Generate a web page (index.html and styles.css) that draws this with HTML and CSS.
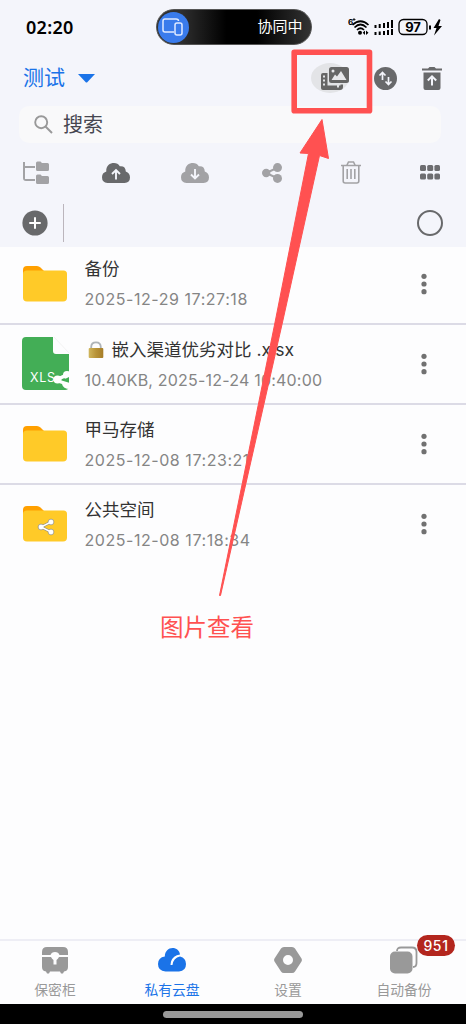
FILE: index.html
```html
<!DOCTYPE html>
<html lang="zh-CN">
<head>
<meta charset="utf-8">
<title>私有云盘</title>
<link rel="stylesheet" href="styles.css">
</head>
<body>
<svg class="defs" width="0" height="0">
  <symbol id="folder" viewBox="0 0 44 36"><path fill="#ffa000" d="M0 4Q0 0 4 0H14Q16 0 17.500 1.500L22 6V12H0Z"/><path fill="#ffca28" d="M0 8Q0 4.500 4 4.500H40.500Q44 4.500 44 8V31.500Q44 35.500 40 35.500H4Q0 35.500 0 31.500Z"/></symbol>
  <symbol id="dots" viewBox="0 0 6 22"><g fill="#717171"><circle cx="3" cy="3.300" r="2.600"/><circle cx="3" cy="11" r="2.600"/><circle cx="3" cy="18.700" r="2.600"/></g></symbol>
  <symbol id="cloud" viewBox="0 0 28 20"><path d="M5.500 20Q0 19.500 0 14.200Q0 10 4.300 8.600C3.800 2.500 8 0 12 0Q15.800 0 17.800 3.200Q23.500 2.500 23.800 8.500Q28 10 28 14.500Q28 19.500 22.500 20Z"/></symbol>
</svg>
<div class="screen">
  <header class="top">
    <div class="status">
      <span class="time">02:20</span>
      <div class="island">
        <span class="cast"><svg width="22" height="18" viewBox="0 0 22 18" fill="none" stroke="#dfeaff" stroke-width="1.500"><path d="M12 14H3Q1 14 1 12V3Q1 1 3 1H14Q16.500 1 16.500 3"/><rect x="13" y="5" width="7" height="12" rx="2"/></svg></span>
        <span>协同中</span>
      </div>
      <div class="signals">
        <svg width="94" height="18" viewBox="0 0 94 18">
          <text x="0" y="7" font-size="8" font-weight="700">6</text><path d="M6 0v3M4.500 1.500h3" stroke="#000" stroke-width=".8"/>
          <g fill="none" stroke="#000" stroke-width="1.700"><path d="M4.500 7Q12.500 -.5 20.500 7M6.500 9.500Q12.500 3.500 18.500 9.500M9 12Q12.500 8.500 16 12"/></g>
          <circle cx="12" cy="14.800" r="2"/><path d="M17 12.500v4.600L14.700 14.800ZM18 12.500v4.600L20.500 14.800Z"/>
          <path d="M26.500 7h2v3h-2zM30.700 6h2v4h-2zM35 5h2v5h-2zM39 4h2v6h-2zM43 2h2v8h-2zM26.500 14h2v3h-2zM30.700 13.500h2v3.500h-2zM35 13h2v4h-2zM39 12h2v5h-2zM43 11h2v6h-2z"/>
          <rect x="51" y="1.500" width="28" height="15" rx="4.500" fill="none" stroke="#000" stroke-width="1.300"/>
          <text x="65" y="13.800" font-size="13" font-weight="700" text-anchor="middle">97</text>
          <path d="M81 7.500h2v4h-2zM91 1l-5.500 9h3L86 17.500 94 8h-3.500L92.500 2z"/>
        </svg>
      </div>
    </div>
    <div class="title">
      <div class="drive">测试<svg width="17" height="9" viewBox="0 0 17 9"><path fill="#1a73e8" d="M0 0H17L9.500 8Q8.500 9 7.500 8Z"/></svg></div>
      <div class="title-actions">
        <span class="gallery"><svg width="30" height="24" viewBox="0 0 30 24" fill="#666"><path fill-rule="evenodd" d="M3 6H7.500V18.500H20.500V17.500H23V20Q23 23 20 23H3Q1 23 1 21V8Q1 6 3 6ZM3 8.500h2v2H3zM3 12.500h2v2H3zM3 16.500h2v2H3zM17 18.500h2v2h-2z"/><rect x="9" y="0" width="20" height="16" rx="2.500"/><g fill="#e8e8eb"><path d="M11.500 13 15 7.500 17 9.500 21 4 26.500 13Z"/><circle cx="13" cy="4" r="1.500"/></g></svg></span>
        <svg width="23" height="23" viewBox="0 0 23 23"><circle cx="11.500" cy="11.500" r="11.500" fill="#68696b"/><path d="M8.500 13V6M5.500 8.500l3-3 3 3M14.500 10v7M11.500 14.500l3 3 3-3" fill="none" stroke="#f4f5fb" stroke-width="1.700"/></svg>
        <svg width="20" height="23" viewBox="0 0 20 23"><path fill="#68696b" d="M0 1.500H6L7.500 0H12.500L14 1.500H20V3.500H0ZM1.500 5.500H18.500V21Q18.500 23 16.500 23H3.500Q1.500 23 1.500 21Z"/><path d="M10 18.500V11M5.800 13.500 10 9.300l4.200 4.200" fill="none" stroke="#f4f5fb" stroke-width="2"/></svg>
      </div>
    </div>
    <div class="search"><svg width="19" height="19" viewBox="0 0 19 19" fill="none" stroke="#999" stroke-width="1.900"><circle cx="7.200" cy="7.200" r="6"/><path d="M11.500 11.500 18 18"/></svg><span>搜索</span></div>
    <div class="tools">
      <svg width="26" height="24" viewBox="0 0 26 24" fill="#a2a2a5"><path d="M0 1H2V5H12V7H2V18H12V20H3Q0 20 0 17ZM13 2Q13 .5 14.500.5H17.500L19 2H24.500Q26 2 26 3.500V8.500Q26 10 24.500 10H14.500Q13 10 13 8.500ZM13 15Q13 13.500 14.500 13.500H17.500L19 15H24.500Q26 15 26 16.500V21.500Q26 23 24.500 23H14.500Q13 23 13 21.500Z"/></svg>
      <svg width="28" height="20" viewBox="0 0 28 20" fill="#68696b"><use href="#cloud"/><path d="M14 16.500V8M10 11 14 7l4 4" fill="none" stroke="#f4f5fb" stroke-width="1.900"/></svg>
      <svg width="28" height="20" viewBox="0 0 28 20" fill="#a2a2a5"><use href="#cloud"/><path d="M14 6V15M10 11.500l4 4 4-4" fill="none" stroke="#f4f5fb" stroke-width="1.900"/></svg>
      <svg width="20" height="20" viewBox="0 0 20 20" fill="#a2a2a5"><path d="M16 4.500 4 10l12 5.500" fill="none" stroke="#a2a2a5" stroke-width="2"/><circle cx="4.200" cy="10" r="4.200"/><circle cx="15.500" cy="4.600" r="4.500"/><circle cx="15.500" cy="15.400" r="4.500"/></svg>
      <svg width="20" height="23" viewBox="0 0 20 23" fill="none" stroke="#a2a2a5" stroke-width="1.600"><path d="M0 4.500H20M6 4 7.500 1H12.500L14 4M2.200 5V20Q2.200 22 4.200 22H15.800Q17.800 22 17.800 20V5M6.200 8V18M10 8V18M13.800 8V18"/></svg>
      <svg width="20" height="15" viewBox="0 0 20 15" fill="#6d6d70"><rect width="6" height="6" rx="1.500"/><rect x="7.200" width="6" height="6" rx="1.500"/><rect x="14.400" width="5.600" height="6" rx="1.500"/><rect y="8.600" width="6" height="6" rx="1.500"/><rect x="7.200" y="8.600" width="6" height="6" rx="1.500"/><rect x="14.400" y="8.600" width="5.600" height="6" rx="1.500"/></svg>
    </div>
    <div class="path">
      <svg width="26" height="26" viewBox="0 0 26 26"><circle cx="13" cy="13" r="12.600" fill="#68696b"/><path d="M8 13h10M13 8v10" stroke="#fff" stroke-width="2" stroke-linecap="round"/></svg>
      <i class="divider"></i>
      <i class="ring"></i>
    </div>
  </header>
  <main class="files">
    <div class="row">
      <div class="thumb"><svg width="44" height="36"><use href="#folder"/></svg></div>
      <div class="info"><div class="name">备份</div><div class="meta">2025-12-29 17:27:18</div></div>
      <svg class="more" width="6" height="22"><use href="#dots"/></svg>
    </div>
    <div class="row">
      <div class="thumb"><svg width="48" height="54" viewBox="0 0 48 54"><path fill="#43ae56" d="M4 0H31V14Q31 17 34 17H47V49Q47 53 43 53H4Q0 53 0 49V4Q0 0 4 0Z"/><path d="M32 0 47 16" stroke="#eee" stroke-width=".7"/><text x="8" y="44.500" fill="#fff" font-size="12.500" textLength="25">XLS</text><g fill="#fff"><circle cx="35.500" cy="42.500" r="4"/><circle cx="45" cy="38" r="4"/><path d="M34 41 47 35V39L38 43 48 46V52Q41 52 40 47L34 45Z"/></g><path fill="#43ae56" d="M42 42.500 47 40V44.500Z"/></svg></div>
      <div class="info"><div class="name"><svg class="lock" width="16" height="18" viewBox="0 0 16 18"><defs><linearGradient id="brass"><stop stop-color="#d0b65d"/><stop offset=".5" stop-color="#b89338"/><stop offset="1" stop-color="#a67d28"/></linearGradient></defs><path d="M3.200 9V6Q3.200 1.300 8 1.300T12.800 6V9" fill="none" stroke="#aeb4b8" stroke-width="1.800"/><rect x=".7" y="7" width="14.600" height="10" rx="1" fill="url(#brass)"/></svg>嵌入渠道优劣对比 .xlsx</div><div class="meta long">10.40KB, 2025-12-24 10:40:00</div></div>
      <svg class="more" width="6" height="22"><use href="#dots"/></svg>
    </div>
    <div class="row">
      <div class="thumb"><svg width="44" height="36"><use href="#folder"/></svg></div>
      <div class="info"><div class="name">甲马存储</div><div class="meta">2025-12-08 17:23:21</div></div>
      <svg class="more" width="6" height="22"><use href="#dots"/></svg>
    </div>
    <div class="row">
      <div class="thumb"><svg width="44" height="36" viewBox="0 0 44 36"><use href="#folder"/><path d="M28 16 18 21l10 5" fill="none" stroke="#8d8b80" stroke-width="2.600"/><g fill="#fff" stroke="#8d8b80" stroke-width=".7"><circle cx="18" cy="21" r="2.900"/><circle cx="28" cy="16" r="2.900"/><circle cx="28" cy="26" r="2.900"/></g><path d="M28 16 18 21l10 5" fill="none" stroke="#fff" stroke-width="1.400"/></svg></div>
      <div class="info"><div class="name">公共空间</div><div class="meta">2025-12-08 17:18:34</div></div>
      <svg class="more" width="6" height="22"><use href="#dots"/></svg>
    </div>
  </main>
  <nav class="tabs">
    <div class="tab"><svg width="28" height="28" viewBox="0 0 28 28" fill="#999"><path d="M1 9V6Q1 1 6 1H22Q27 1 27 6V9H18.500Q17.500 6 14 6T9.500 9ZM1 11H10Q11 13 12.500 14V18.500H15.500V14Q17 13 18 11H27V21Q27 25 23 25.500L22 27.500H20L19 25.500H9L8 27.500H6L5 25.500Q1 25 1 21Z"/></svg><span>保密柜</span></div>
    <div class="tab active"><svg width="28" height="28" viewBox="0 0 28 28"><path fill="#1a73e8" d="M7.500 25.500Q0 25 0 18Q0 11.500 6.800 10.500C7 5 10.500 2 14.500 2C18.500 2 21.500 4.500 22 8.500Q15 9.500 13 15.500L12.500 19H14.500Q15.500 11.500 22 10.500Q28 12 28 18Q28 25 21 25.500Z"/></svg><span>私有云盘</span></div>
    <div class="tab"><svg width="28" height="28" viewBox="0 0 28 28" fill="#999"><path fill-rule="evenodd" d="M7 2.500Q8 1 10 1H18Q20 1 21 2.500L27.500 12.500Q28.300 14 27.500 15.500L21 25.500Q20 27 18 27H10Q8 27 7 25.500L.5 15.500Q-.3 14 .5 12.500ZM14 9A5 5 0 1 0 14 19 5 5 0 1 0 14 9Z"/></svg><span>设置</span></div>
    <div class="tab"><svg width="28" height="28" viewBox="0 0 28 28"><path d="M7 5Q7 1.500 11 1.500H22Q26.500 1.500 26.500 6V17Q26.500 21 23 21" fill="none" stroke="#999" stroke-width="1.800"/><rect x="0" y="5.500" width="22.500" height="22" rx="5" fill="#999"/></svg><span>自动备份</span><b class="badge">951</b></div>
  </nav>
  <div class="gesture"><i></i></div>
  <svg class="callout" width="466" height="1024" viewBox="0 0 466 1024"><rect x="294.200" y="52.300" width="75.300" height="58.500" fill="none" stroke="#ff5151" stroke-width="5.600" stroke-linejoin="round"/><path fill="#ff5151" stroke="#ff5151" stroke-linejoin="round" d="M322 119.500 328.500 158.500 319.500 155.500 283 320 220.500 595.500H219.500L275.500 320 308.500 153.500 300 153Z"/></svg>
  <div class="caption">图片查看</div>
</div>
</body>
</html>
```
FILE: styles.css
```css
* { box-sizing: border-box; }
body { margin: 0; background: #fdfdfe; font-family: Inter, "Noto Sans CJK SC", sans-serif; color: #333; }
svg { display: block; flex: none; }
.defs { position: absolute; }
.screen { position: relative; width: 466px; height: 1024px; display: flex; flex-direction: column; overflow: hidden; }
.top { height: 247px; flex: none; background: #f4f5fb; }
.status { height: 54px; display: grid; grid-template-columns: 129.500px 156px 1fr; align-items: center; padding-left: 26px; }
.time { font: 600 18px "Noto Sans", sans-serif; color: #000; letter-spacing: .3px; padding-bottom: 1px; }
.island { width: 156px; height: 36px; border: 1px solid #555; border-radius: 18px; background: linear-gradient(90deg, #303030 15%, #000 45%, #000 65%, #333); color: #fff; display: flex; align-items: center; justify-content: space-between; padding: 0 8px 0 1px; font-size: 15px; line-height: 20px; }
.cast { width: 31px; height: 31px; border-radius: 50%; background: #397bec; display: grid; place-items: center; }
.signals { padding-left: 36px; }
.title { height: 48px; display: flex; align-items: center; justify-content: space-between; padding: 0 24px 0 23px; }
.drive { display: flex; align-items: center; gap: 13px; color: #1a73e8; font-size: 21px; line-height: 30px; }
.title-actions { display: flex; align-items: center; }
.gallery { width: 38px; height: 30px; border-radius: 50%; background: #e3e4e7; margin-right: 25px; padding: 4px 0 0 9px; }
.title-actions > svg:last-child { margin-left: 25px; }
.search { height: 37px; margin: 4px 25px 0 19px; border-radius: 10px; background: #f9f9fa; padding: 0 15px; display: flex; align-items: center; gap: 10px; color: #464650; font-size: 20px; line-height: 36px; }
.tools { height: 57px; padding: 2px 26px 0 23px; display: grid; grid-template-columns: 79px 79px 81px 79px 79px 20px; align-items: center; }
.path { height: 46px; display: flex; align-items: center; padding: 0 23px 0 22px; }
.divider { height: 38px; width: 1px; margin-left: 15px; background: #bbb5bc; }
.ring { width: 26px; height: 26px; border: 2px solid #68696b; border-radius: 50%; margin-left: auto; }
.files { flex: 1; }
.row { height: 80px; border-bottom: 2px solid #dcdbe6; display: flex; align-items: center; padding: 0 39px 0 23px; }
.row:first-child { height: 78px; padding-bottom: 3px; }
.row:last-child { border-color: transparent; }
.row .more { margin-left: auto; }
.thumb { width: 61.500px; }
.row:nth-child(2) .thumb { margin-left: -1px; width: 62.500px; }
.name { display: flex; align-items: center; font-size: 17.500px; line-height: 26px; margin-bottom: 5px; white-space: pre; }
.lock { margin: 0 8px 0 3px; }
.meta { color: #858585; font-size: 16px; line-height: 24px; white-space: nowrap; letter-spacing: .55px; }
.meta.long { letter-spacing: .2px; }
.tabs { height: 65px; border-top: 2px solid #eeeef5; display: grid; grid-template-columns: 110px 124px 108px 124px; background: #fdfdfe; }
.tab { position: relative; display: flex; flex-direction: column; align-items: center; padding-top: 5px; color: #999; font-size: 13.800px; line-height: 20px; gap: 6px; }
.active { color: #1a73e8; }
.badge { position: absolute; left: 75px; top: -6px; width: 38px; height: 21px; border-radius: 11px; background: #b3261e; color: #fff; font-size: 14px; line-height: 21px; text-align: center; letter-spacing: .6px; font-weight: 500; }
.gesture { height: 20px; background: #000; display: flex; justify-content: center; align-items: center; }
.gesture i { width: 140px; height: 7px; border-radius: 4px; background: #999; }
.callout { position: absolute; inset: 0; }
.caption { position: absolute; left: 160px; top: 612px; color: #ff5151; font-size: 23.500px; line-height: 32px; white-space: nowrap; }
```
